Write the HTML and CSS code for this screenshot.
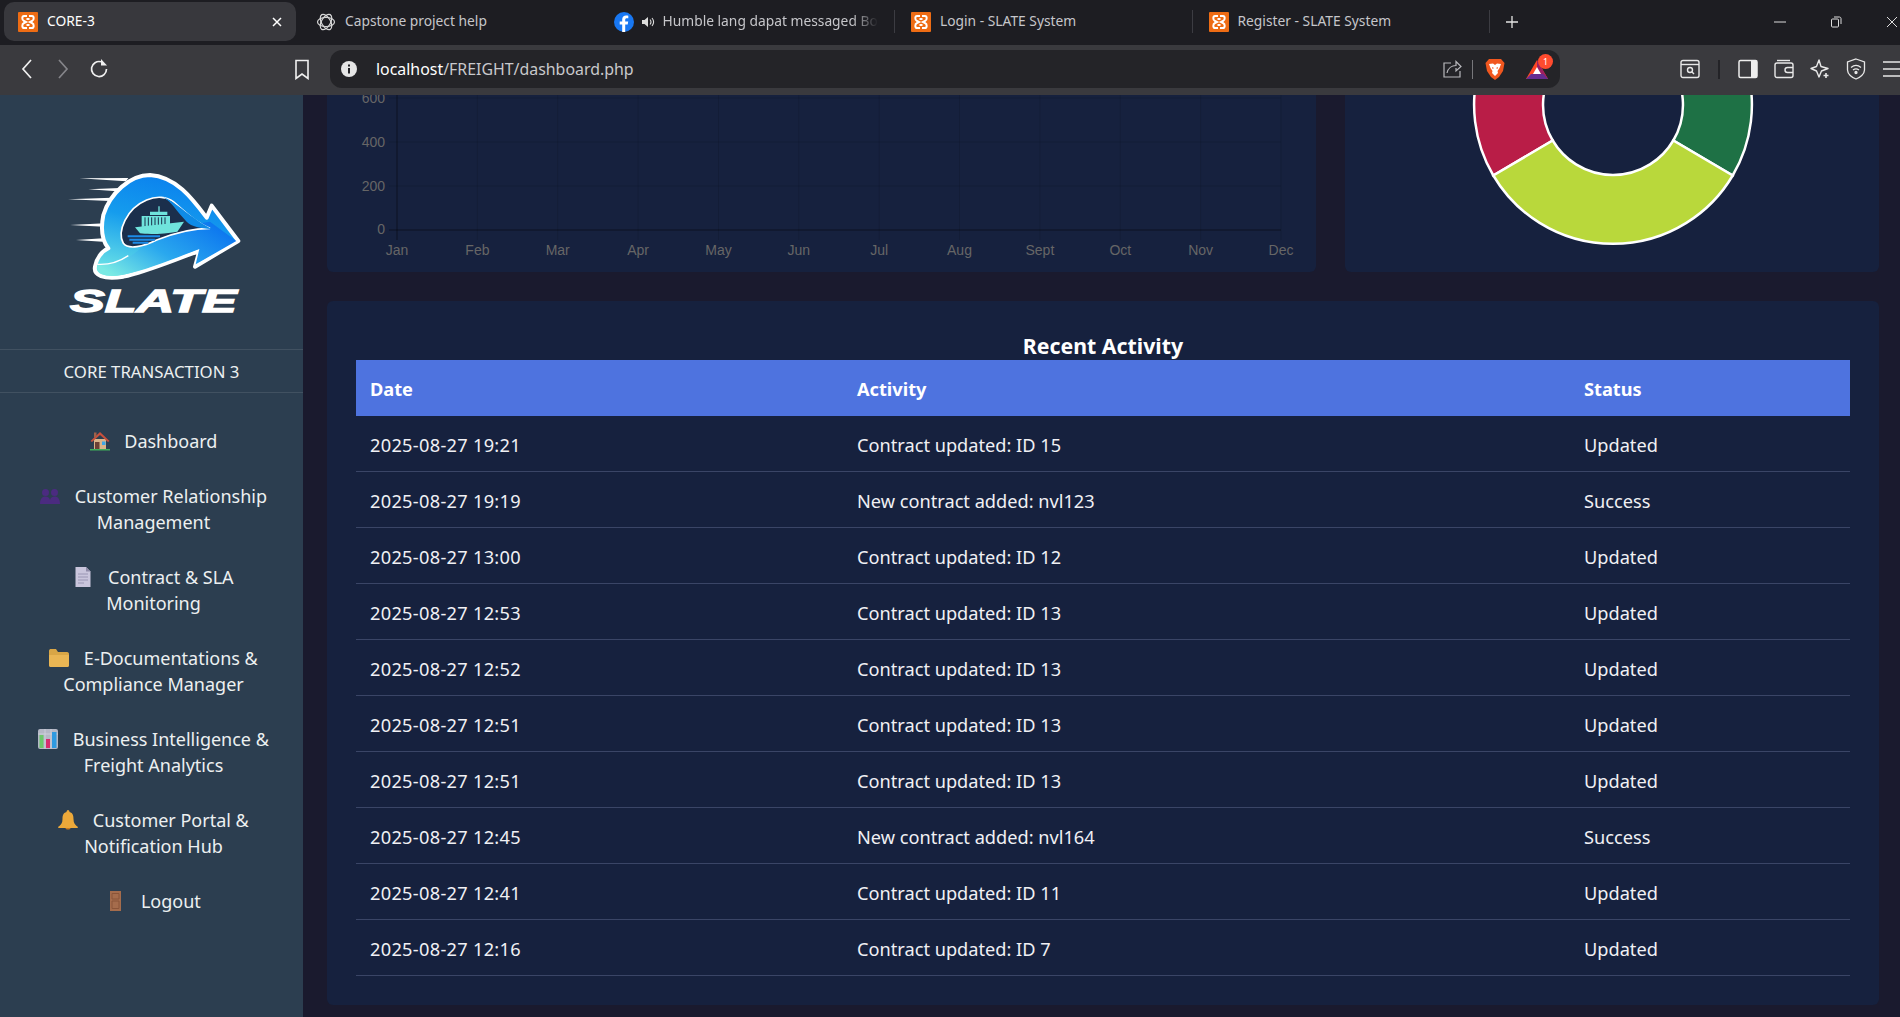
FILE: index.html
```html
<!DOCTYPE html>
<html lang="en">
<head>
    <meta charset="UTF-8">
    <title>CORE-3</title>
    <link rel="stylesheet" href="styles.css">
</head>
<body>
<svg class="defs" width="0" height="0">
    <symbol id="xampp" viewBox="0 0 20 20">
        <rect width="20" height="20" rx="1" fill="#ee6c14"/>
        <path d="M9 4H6C4 4 3.500 8 6 9L8 10L6 11C3.500 12 4 16 6 16H9M11 4H14C16 4 16.500 8 14 9L12 10L14 11C16.500 12 16 16 14 16H11M8.500 7H11.500M8.500 13H11.500" fill="none" stroke="#fff" stroke-width="2"/>
    </symbol>
</svg>

<header class="browser">
    <div class="tabstrip">
        <div class="tab tab-active">
            <svg class="favicon"><use href="#xampp"/></svg>
            <span class="tab-title">CORE-3</span>
            <span class="tab-close">
                <svg width="12" height="12" viewBox="0 0 12 12"><path d="M2 2L10 10M10 2L2 10" stroke="#fff" stroke-width="1.500"/></svg>
            </span>
        </div>
        <div class="tab">
            <svg class="favicon" viewBox="0 0 20 20" fill="none" stroke="#d8d8d8" stroke-width="1.200">
                <ellipse cx="10" cy="10" rx="8.500" ry="4.500"/>
                <ellipse cx="10" cy="10" rx="8.500" ry="4.500" transform="rotate(60 10 10)"/>
                <ellipse cx="10" cy="10" rx="8.500" ry="4.500" transform="rotate(120 10 10)"/>
            </svg>
            <span class="tab-title">Capstone project help</span>
        </div>
        <div class="tab">
            <svg class="favicon" viewBox="0 0 20 20">
                <circle cx="10" cy="10" r="10" fill="#1877f2"/>
                <path d="M11.200 20V12.500H13.700L14.200 9.500H11.200V7.800C11.200 6.900 11.600 6.300 12.800 6.300H14.300V3.700C13.700 3.600 12.900 3.500 12.100 3.500C9.800 3.500 8.200 4.900 8.200 7.400V9.500H5.700V12.500H8.200V20Z" fill="#fff"/>
            </svg>
            <svg class="speaker" width="14" height="14" viewBox="0 0 14 14">
                <path d="M1 5H3.500L7 2V12L3.500 9H1Z" fill="#ddd"/>
                <path d="M9 4.500C10.200 6 10.200 8 9 9.500M11 3C13 5.500 13 8.500 11 11" fill="none" stroke="#ddd" stroke-width="1.100"/>
            </svg>
            <span class="tab-title tab-fade">Humble lang dapat messaged Bo</span>
        </div>
        <div class="tab">
            <svg class="favicon"><use href="#xampp"/></svg>
            <span class="tab-title">Login - SLATE System</span>
        </div>
        <div class="tab">
            <svg class="favicon"><use href="#xampp"/></svg>
            <span class="tab-title">Register - SLATE System</span>
        </div>
        <span class="new-tab">
            <svg width="14" height="14" viewBox="0 0 14 14"><path d="M7 1V13M1 7H13" stroke="#e4e4e4" stroke-width="1.300"/></svg>
        </span>
        <div class="window-controls">
            <svg width="12" height="12" viewBox="0 0 12 12"><path d="M0 6H12" stroke="#ddd"/></svg>
            <svg width="12" height="12" viewBox="0 0 12 12" fill="none" stroke="#ddd"><rect x="1.500" y="3" width="7" height="8" rx="1"/><path d="M4 1H9.500C10.300 1 11 1.700 11 2.500V8"/></svg>
            <svg width="12" height="12" viewBox="0 0 12 12"><path d="M1 1L11 11M11 1L1 11" stroke="#ddd"/></svg>
        </div>
    </div>

    <div class="toolbar">
        <span class="tool-btn">
            <svg width="14" height="22" viewBox="0 0 14 22"><path d="M11 2L3 11L11 20" fill="none" stroke="#f0f0f0" stroke-width="1.700"/></svg>
        </span>
        <span class="tool-btn">
            <svg width="14" height="22" viewBox="0 0 14 22"><path d="M3 2L11 11L3 20" fill="none" stroke="#85858a" stroke-width="1.700"/></svg>
        </span>
        <span class="tool-btn">
            <svg width="22" height="22" viewBox="0 0 22 22" fill="none" stroke="#f0f0f0" stroke-width="1.700"><path d="M18.500 11A7.500 7.500 0 1 1 13 3.800"/><path d="M13 1V7.500H19" stroke-width="0" fill="#f0f0f0"/></svg>
        </span>
        <span class="tool-btn bookmark">
            <svg width="16" height="21" viewBox="0 0 16 21"><path d="M2 1.500H14V19.500L8 15L2 19.500Z" fill="none" stroke="#f0f0f0" stroke-width="1.600"/></svg>
        </span>

        <div class="urlbar">
            <svg class="url-info" width="16" height="16" viewBox="0 0 16 16"><circle cx="8" cy="8" r="8" fill="#e6e6e6"/><path d="M7 3.500H9V5.500H7ZM7 7H9V12.500H7Z" fill="#222226"/></svg>
            <span class="url-text"><b>localhost</b>/FREIGHT/dashboard.php</span>
            <div class="url-actions">
                <svg width="20" height="20" viewBox="0 0 20 20" fill="none" stroke="#b8b8bc" stroke-width="1.200"><path d="M9 4H2V18H18V12"/><path d="M5 14C6 9 10 6.500 14 6.500V2.500L19 7.500L14 12V9"/></svg>
                <i class="url-sep"></i>
                <svg class="brave-icon" width="20" height="22" viewBox="0 0 20 22">
                    <path d="M4 1H16L19.500 5L18 13L14 19L10 22L6 19L2 13L0.500 5Z" fill="#f1571f"/>
                    <path d="M4 6L8 5.500L10 7L12 5.500L16 6L14.500 10L12.500 13L13 15L10 18L7 15L7.500 13L5.500 10Z" fill="#fff"/>
                    <path d="M7 9L9 10L7.500 11ZM13 9L11 10L12.500 11Z" fill="#f1571f"/>
                </svg>
                <span class="bat">
                    <svg width="22" height="20" viewBox="0 0 22 20">
                        <path d="M11 1L22 20H0Z" fill="#ff4724"/>
                        <path d="M11 1L22 20H14L11 11Z" fill="#9e1f63"/>
                        <path d="M0 20L5 15H17L22 20Z" fill="#662d91"/>
                        <path d="M11 8L15 15H7Z" fill="#fff"/>
                    </svg>
                    <span class="bat-badge">1</span>
                </span>
            </div>
        </div>

        <span class="tool-btn first-tool">
            <svg width="20" height="20" viewBox="0 0 20 20" fill="none" stroke="#e8e8e8" stroke-width="1.400"><rect x="1" y="1.500" width="18" height="17" rx="2"/><path d="M1 5.500H19"/><circle cx="10" cy="11" r="2.500"/><path d="M12 13L14 15"/></svg>
        </span>
        <i class="tool-divider"></i>
        <span class="tool-btn panel-tool">
            <svg width="20" height="20" viewBox="0 0 20 20"><rect x="1" y="1.500" width="18" height="17" rx="1.500" fill="none" stroke="#eee" stroke-width="1.500"/><rect x="13" y="2" width="6" height="16" fill="#eee"/></svg>
        </span>
        <span class="tool-btn">
            <svg width="20" height="20" viewBox="0 0 20 20" fill="none" stroke="#e8e8e8" stroke-width="1.400"><rect x="1" y="4" width="18" height="14.500" rx="2"/><path d="M3 1.500H16"/><path d="M19 8.500H13.500A2.500 2.500 0 0 0 13.500 13.500H19"/></svg>
        </span>
        <span class="tool-btn">
            <svg width="20" height="20" viewBox="0 0 20 20" fill="none" stroke="#e8e8e8" stroke-width="1.400"><path d="M9 1L11 7.500L18 9.500L11.500 12L9 18L6.500 12L1 9.500L6.500 7.500Z" stroke-linejoin="round"/><path d="M16 14V19M13.500 16.500H18.500" stroke-width="1.600"/></svg>
        </span>
        <span class="tool-btn">
            <svg width="20" height="22" viewBox="0 0 20 22" fill="none" stroke="#e8e8e8" stroke-width="1.300"><path d="M10 1L18.500 4V12C18.500 16 14 19.500 10 21C6 19.500 1.500 16 1.500 12V4Z"/><path d="M5 9.500C8 7 12 7 15 9.500M7 12C8.800 10.600 11.200 10.600 13 12"/><circle cx="10" cy="14.500" r="1" fill="#e8e8e8"/></svg>
        </span>
        <span class="tool-btn">
            <svg width="20" height="18" viewBox="0 0 20 18"><path d="M1 2H20M1 9H20M1 16H20" stroke="#e8e8e8" stroke-width="1.500"/></svg>
        </span>
    </div>
</header>

<div class="app">
    <aside class="sidebar">
        <div class="brand">
            <svg class="logo" width="190" height="155" viewBox="0 0 570 465">
                <defs>
                    <linearGradient id="ringFill" x1="0.2" y1="1" x2="0.55" y2="0">
                        <stop offset="0" stop-color="#6fe6e6"/>
                        <stop offset="0.55" stop-color="#159ced"/>
                        <stop offset="1" stop-color="#0a80ee"/>
                    </linearGradient>
                    <linearGradient id="bandFill" x1="0" y1="0.8" x2="1" y2="0.2">
                        <stop offset="0" stop-color="#7aeae4"/>
                        <stop offset="0.45" stop-color="#2aa8ee"/>
                        <stop offset="1" stop-color="#0a72ef"/>
                    </linearGradient>
                </defs>
                <g fill="#fff">
                    <path d="M58 40L205 39L198 49Z"/>
                    <path d="M85 73L180 69L172 79Z"/>
                    <path d="M24 103L155 98L150 108Z"/>
                    <path d="M30 180L135 175L130 185Z"/>
                    <path d="M48 225L130 220L128 230Z"/>
                </g>
                <path d="M535 228L405 305L418 258C340 285 260 320 190 335C130 345 100 330 105 305C110 280 125 260 145 250C125 225 122 190 130 150C150 85 210 30 270 30C350 35 400 105 440 158L455 122Z" fill="url(#ringFill)" stroke="#fff" stroke-width="12" stroke-linejoin="round"/>
                <path d="M112 300C160 300 210 285 250 240C310 205 400 175 450 170L529 228L407 298L418 252C340 281 260 316 190 329C140 339 105 328 112 300Z" fill="url(#bandFill)"/>
                <path d="M112 298C140 300 175 292 205 272" fill="none" stroke="#fff" stroke-width="4"/>
                <path d="M190 235C170 200 200 130 260 105C290 92 320 95 340 110C375 140 410 175 450 190C390 190 340 205 290 225C250 245 205 255 190 235Z" fill="#1b2f4c" stroke="#fff" stroke-width="5"/>
                <path d="M310 97C340 105 400 165 455 192C420 190 395 185 380 170C350 140 335 110 310 97Z" fill="#0f8be6"/>
                <g fill="#6fe3dc">
                    <path d="M225 187L372 170L352 200C310 208 260 208 240 205Z"/>
                    <path d="M245 153H330V180L245 186Z"/>
                    <path d="M270 140H322V150H270ZM295 124H299V140H295Z"/>
                </g>
                <path d="M255 157V183M265 157V182M275 157V181M285 157V180M295 157V179M305 157V178M315 157V177" stroke="#1b2f4c" stroke-width="3"/>
                <path d="M203 214H300M208 224H285M218 233H265" stroke="#1c8ce8" stroke-width="6"/>
                <text class="logo-word" x="30" y="441" textLength="500" lengthAdjust="spacingAndGlyphs">SLATE</text>
            </svg>
        </div>
        <div class="module-name">CORE TRANSACTION 3</div>
        <nav class="side-nav">
            <a class="nav-item">
                <svg class="nav-icon" viewBox="0 0 20 20">
                    <path d="M4 8H16V18H4Z" fill="#d9b48a"/>
                    <path d="M0.500 10L10 1L19.500 10L18 11L10 4L2 11Z" fill="#c8503c"/>
                    <path d="M4 1.500H6.500V5L4 7Z" fill="#a0614a"/>
                    <rect x="5" y="11" width="4.500" height="7" fill="#6d4034"/>
                    <rect x="12" y="10.500" width="3.500" height="3.500" fill="#3ca6e6"/>
                    <rect x="0" y="18" width="20" height="1.500" fill="#3fae5a"/>
                </svg> Dashboard
            </a>
            <a class="nav-item">
                <svg class="nav-icon" viewBox="0 0 20 20" fill="#4b2b80">
                    <circle cx="5.500" cy="6.500" r="3.500"/><circle cx="14.500" cy="6.500" r="3.500"/>
                    <path d="M0 18C0 13 2 10.500 5.500 10.500C8 10.500 9.500 12 10 14C10.500 12 12 10.500 14.500 10.500C18 10.500 20 13 20 18Z"/>
                </svg> Customer Relationship Management
            </a>
            <a class="nav-item">
                <svg class="nav-icon" viewBox="0 0 20 20">
                    <path d="M2.500 0H13L17.500 4.500V20H2.500Z" fill="#c9c5dc"/>
                    <path d="M13 0L17.500 4.500H13Z" fill="#8f8ba8"/>
                    <path d="M5 7H15M5 10H15M5 13H15M5 16H11" stroke="#9a96b4"/>
                </svg> Contract &amp; SLA Monitoring
            </a>
            <a class="nav-item">
                <svg class="nav-icon" viewBox="0 0 20 20">
                    <path d="M0 3C0 1.500 1 1 2 1H7L9 4H18C19.500 4 20 5 20 6V17C20 18.500 19 19 18 19H2C1 19 0 18.500 0 17Z" fill="#d9a646"/>
                    <path d="M0 7H20V17C20 18.500 19 19 18 19H2C1 19 0 18.500 0 17Z" fill="#eab654"/>
                </svg> E-Documentations &amp; Compliance Manager
            </a>
            <a class="nav-item">
                <svg class="nav-icon" viewBox="0 0 20 20">
                    <rect width="20" height="20" rx="2" fill="#b5b8c6"/>
                    <path d="M7 0V20M13 0V20M0 5H20" stroke="#d2d4de" stroke-width="0.800"/>
                    <rect x="1.500" y="6" width="4" height="13" fill="#6cc76a"/>
                    <rect x="8" y="10" width="4" height="9" fill="#d82c6e"/>
                    <rect x="14" y="3" width="4.500" height="16" fill="#2f9ae0"/>
                </svg> Business Intelligence &amp; Freight Analytics
            </a>
            <a class="nav-item">
                <svg class="nav-icon" viewBox="0 0 20 20">
                    <path d="M10 0C11 0 11.500 1 11.500 2C15 3 15.500 6 15.500 9C15.500 13 17 15 20 17C20 18 19 18 18 18H2C1 18 0 18 0 17C3 15 4.500 13 4.500 9C4.500 6 5 3 8.500 2C8.500 1 9 0 10 0Z" fill="#eda93a"/>
                    <path d="M7.500 18H12.500C12.500 20 7.500 20 7.500 18Z" fill="#c9791e"/>
                </svg> Customer Portal &amp; Notification Hub
            </a>
            <a class="nav-item">
                <svg class="nav-icon" viewBox="0 0 20 20">
                    <rect x="4" y="0" width="11" height="20" fill="#a56c4c"/>
                    <path d="M6 2.500H13V8H6ZM6 10H13V17.500H6Z" fill="none" stroke="#8a5438"/>
                </svg> Logout
            </a>
        </nav>
    </aside>

    <main class="content">
        <section class="chart-row">
            <div class="card chart-card">
                <svg class="chart" width="989" height="177" viewBox="0 0 989 177">
                    <g class="grid">
                        <path d="M150.400 0V145M230.700 0V145M311.100 0V145M391.500 0V145M471.800 0V145M552.200 0V145M632.500 0V145M712.900 0V145M793.300 0V145M873.600 0V145M954 0V145"/>
                        <path d="M62 3H954M62 47H954M62 91H954"/>
                    </g>
                    <path class="axis" d="M70 0V145M62 135H954"/>
                    <g class="tick-y">
                        <text x="58" y="8">600</text>
                        <text x="58" y="52">400</text>
                        <text x="58" y="96">200</text>
                        <text x="58" y="139">0</text>
                    </g>
                    <g class="tick-x">
                        <text x="70" y="160">Jan</text>
                        <text x="150.400" y="160">Feb</text>
                        <text x="230.700" y="160">Mar</text>
                        <text x="311.100" y="160">Apr</text>
                        <text x="391.500" y="160">May</text>
                        <text x="471.800" y="160">Jun</text>
                        <text x="552.200" y="160">Jul</text>
                        <text x="632.500" y="160">Aug</text>
                        <text x="712.900" y="160">Sept</text>
                        <text x="793.300" y="160">Oct</text>
                        <text x="873.600" y="160">Nov</text>
                        <text x="954" y="160">Dec</text>
                    </g>
                </svg>
            </div>
            <div class="card donut-card">
                <svg class="donut" width="534" height="177" viewBox="1 0 534 177">
                    <path d="M149.300 80.500A139 139 0 0 1 136 -30L211.600 -30A70 70 0 0 0 208.700 45.500Z" fill="#b91d47"/>
                    <path d="M388.700 80.500A139 139 0 0 0 402 -30L326.400 -30A70 70 0 0 1 329.300 45.500Z" fill="#1e7145"/>
                    <path d="M388.700 80.500A139 139 0 0 1 149.300 80.500L208.700 45.500A70 70 0 0 0 329.300 45.500Z" fill="#b9d83b"/>
                </svg>
            </div>
        </section>

        <section class="card activity-card">
            <h3 class="activity-title">Recent Activity</h3>
            <table class="activity-table">
                <thead>
                    <tr><th class="col-date">Date</th><th class="col-activity">Activity</th><th>Status</th></tr>
                </thead>
                <tbody>
                    <tr><td>2025-08-27 19:21</td><td>Contract updated: ID 15</td><td>Updated</td></tr>
                    <tr><td>2025-08-27 19:19</td><td>New contract added: nvl123</td><td>Success</td></tr>
                    <tr><td>2025-08-27 13:00</td><td>Contract updated: ID 12</td><td>Updated</td></tr>
                    <tr><td>2025-08-27 12:53</td><td>Contract updated: ID 13</td><td>Updated</td></tr>
                    <tr><td>2025-08-27 12:52</td><td>Contract updated: ID 13</td><td>Updated</td></tr>
                    <tr><td>2025-08-27 12:51</td><td>Contract updated: ID 13</td><td>Updated</td></tr>
                    <tr><td>2025-08-27 12:51</td><td>Contract updated: ID 13</td><td>Updated</td></tr>
                    <tr><td>2025-08-27 12:45</td><td>New contract added: nvl164</td><td>Success</td></tr>
                    <tr><td>2025-08-27 12:41</td><td>Contract updated: ID 11</td><td>Updated</td></tr>
                    <tr><td>2025-08-27 12:16</td><td>Contract updated: ID 7</td><td>Updated</td></tr>
                </tbody>
            </table>
        </section>
    </main>
</div>
</body>
</html>
```

FILE: styles.css
```css
* { box-sizing: border-box; }
html, body { height: 100%; }
body { margin: 0; display: flex; flex-direction: column; overflow: hidden; background: #1a1a2e; color: #fff; font-family: "Noto Sans", "Open Sans", sans-serif; }
.defs { position: absolute; }

/* browser chrome */
.browser { flex: none; }
.tabstrip { display: flex; align-items: flex-start; height: 45px; padding: 2px 0 0 4px; background: #1d1d22; }
.tab { display: flex; align-items: center; flex: none; width: 297.500px; height: 39px; padding-left: 16px; position: relative; color: #c6c6ca; font-size: 13.800px; }
.tab:not(.tab-active)::after { content: ""; position: absolute; right: 0; top: 8px; height: 23px; width: 1px; background: #3c3c42; }
.tab:nth-child(2)::after { display: none; }
.tab-active { width: 292px; margin-right: 4px; padding-left: 14px; background: #38383d; border-radius: 10px; color: #fff; }
.favicon { flex: none; width: 20px; height: 20px; margin-right: 9px; }
.speaker { flex: none; margin-right: 8px; margin-left: -2px; }
.tab-title { white-space: nowrap; overflow: hidden; margin-top: -2px; }
.tab-fade { width: 215px; -webkit-mask-image: linear-gradient(to right, #000 88%, transparent); mask-image: linear-gradient(to right, #000 88%, transparent); }
.tab-close { margin-left: auto; margin-right: 13px; display: flex; }
.new-tab { display: flex; align-self: center; margin-left: 15px; margin-top: -3px; }
.window-controls { display: flex; align-items: center; align-self: center; gap: 44px; margin-left: auto; margin-top: -3px; padding-right: 2px; }

.toolbar { display: flex; align-items: center; height: 50px; padding: 0 0 2px 9px; background: #3a3a3e; }
.tool-btn { display: flex; align-items: center; justify-content: center; flex: none; width: 36px; height: 36px; }
.bookmark { margin-left: 167px; }
.first-tool { margin-left: 112px; }
.panel-tool { margin-left: 10px; }
.tool-divider { flex: none; width: 2px; height: 19px; margin-left: 10px; background: #232327; }
.urlbar { display: flex; align-items: center; flex: none; width: 1230px; height: 38px; margin-left: 10px; padding-left: 11px; background: #242428; border-radius: 12px; }
.url-text { margin-left: 19px; font-size: 15.900px; color: #c9c9cc; }
.url-text b { font-weight: 400; color: #fff; }
.url-actions { display: flex; align-items: center; margin-left: auto; }
.url-sep { width: 1px; height: 19px; margin: 0 12px 0 10px; background: #77777b; }
.brave-icon { display: block; }
.bat { position: relative; display: flex; margin: 0 12px 0 21px; }
.bat-badge { position: absolute; right: -5px; top: -5px; width: 15px; height: 15px; border-radius: 50%; background: #ff4b2e; color: #fff; font-size: 9px; line-height: 15px; text-align: center; }

/* app layout */
.app { display: flex; flex: 1; min-height: 0; }
.sidebar { flex: none; width: 303px; background: #2c3e50; color: #ecf0f1; }
.brand { height: 254px; padding: 70px 0 0 60px; }
.logo { display: block; }
.logo-word { font: italic 700 92px "Liberation Sans", sans-serif; fill: #fff; stroke: #fff; stroke-width: 4px; }
.module-name { height: 44px; line-height: 44px; text-align: center; font-size: 16.800px; border-top: 1px solid rgba(255,255,255,0.1); border-bottom: 1px solid rgba(255,255,255,0.1); }
.side-nav { display: flex; flex-direction: column; padding: 20px 18px 0 22px; }
.nav-item { display: block; padding: 14.500px 6px; line-height: 26px; font-size: 18px; text-align: center; }
.nav-icon { display: inline-block; width: 20px; height: 20px; margin-right: 10px; vertical-align: -3px; }

.content { flex: 1; min-width: 0; padding: 0 21px 12px 24px; display: flex; flex-direction: column; gap: 29px; }
.card { background: #16213e; border-radius: 6px; }
.chart-row { display: flex; gap: 29px; height: 177px; flex: none; }
.chart-card { width: 989px; border-radius: 0 0 6px 6px; overflow: hidden; }
.donut-card { width: 534px; border-radius: 0 0 6px 6px; overflow: hidden; }
.chart, .donut { display: block; }
.grid path { fill: none; stroke: rgba(0,0,0,0.1); }
.axis { fill: none; stroke: rgba(0,0,0,0.45); }
.chart text { font: 14px "Liberation Sans", sans-serif; fill: #666; }
.tick-y text { text-anchor: end; }
.tick-x text { text-anchor: middle; }
.donut path { stroke: #fff; stroke-width: 2.500; }

.activity-card { flex: 1; padding: 29px 29px 0; }
.activity-title { margin: 0; height: 30px; line-height: 32px; font-size: 21.300px; font-weight: 700; text-align: center; color: #fff; }
.activity-table { width: 100%; border-collapse: collapse; table-layout: fixed; font-size: 18.200px; }
.activity-table th { height: 56px; padding: 2px 14px 0; background: #4e73df; text-align: left; font-weight: 700; }
.activity-table td { height: 56px; padding: 3px 14px 0; border-bottom: 1px solid #3a4566; color: #f0f0f4; }
.activity-table tbody tr:first-child td { height: 55px; }
.activity-table td:first-child { letter-spacing: 0.3px; }
.col-date { width: 487px; }
.col-activity { width: 727px; }
```
